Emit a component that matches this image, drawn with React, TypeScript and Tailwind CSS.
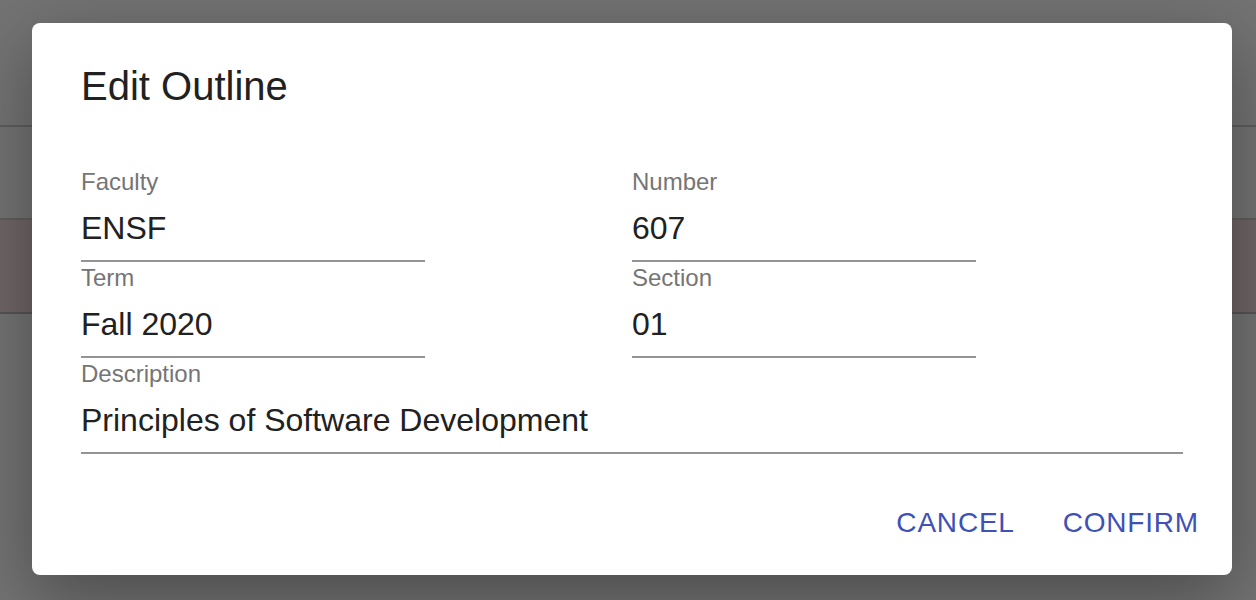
import React from "react"

const font = { fontFamily: '"Liberation Sans", Arial, Helvetica, sans-serif' }

function Field({ label, value, wide }: { label: string; value: string; wide?: boolean }) {
  return (
    <div
      className={`flex h-[96px] flex-col border-b-2 border-[#949494] ${wide ? "w-full" : "w-[344px]"}`}
    >
      <div className="pt-[2px] text-[24px] leading-[28px] text-[#757575]">{label}</div>
      <div className="mt-auto mb-[13px] text-[32px] leading-[38px] text-[#212121]">{value}</div>
    </div>
  )
}

export default function App() {
  return (
    <div className="relative h-[600px] w-[1256px] overflow-hidden bg-[#737373]" style={font}>
      {/* page behind the backdrop */}
      <div className="flex flex-col">
        <div className="h-[125px]" />
        <div className="h-[2px] bg-[#5e5e5e]" />
        <div className="h-[91px]" />
        <div className="h-[2px] bg-[#5e5e5e]" />
        <div className="h-[92px] bg-[#6f6566]" />
        <div className="h-[2px] bg-[#555555]" />
      </div>

      {/* dialog */}
      <div className="absolute inset-0 flex items-start pl-[32px] pt-[23px]">
        <div className="flex h-[552px] w-[1200px] flex-col rounded-[8px] bg-white px-[49px] pt-[40px] shadow-[0_22px_70px_rgba(0,0,0,0.35)]">
          <h2 className="text-[40px] leading-[46px] text-[#212121]">Edit Outline</h2>

          <div className="mt-[57px] grid grid-cols-2">
            <Field label="Faculty" value="ENSF" />
            <Field label="Number" value="607" />
            <Field label="Term" value="Fall 2020" />
            <Field label="Section" value="01" />
          </div>
          <Field label="Description" value="Principles of Software Development" wide />

          <div className="mr-[-32px] mt-[32px] flex justify-end gap-[16px]">
            <button className="px-[16px] py-[12px] text-[28px] leading-[49px] tracking-[0.8px] text-[#3f51b5]">
              CANCEL
            </button>
            <button className="px-[16px] py-[12px] text-[28px] leading-[49px] tracking-[0.8px] text-[#3f51b5]">
              CONFIRM
            </button>
          </div>
        </div>
      </div>
    </div>
  )
}
